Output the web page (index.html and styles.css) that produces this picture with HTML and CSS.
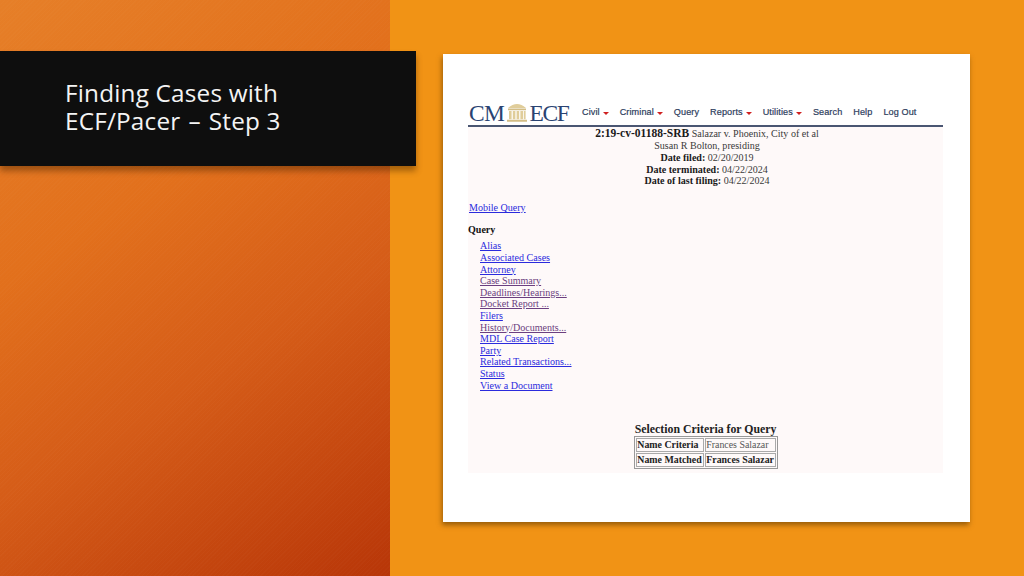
FILE: index.html
```html
<!DOCTYPE html>
<html lang="en">
<head>
<meta charset="utf-8">
<title>Finding Cases with ECF/Pacer – Step 3</title>
<link rel="stylesheet" href="styles.css">
</head>
<body>
<main class="slide">
  <div class="side"></div>
  <div class="stage">
    <section class="shot">
      <header class="ecf-head">
        <div class="logo">
          <span>CM</span>
          <svg class="temple" viewBox="0 0 20 20" width="20" height="20" aria-hidden="true">
            <path d="M1 6Q10-2 19 6z" fill="#e0cd9a"/>
            <path d="M1 6.500h18v1.800H1zM0 17.800h20v2H0z" fill="#d3bd85"/>
            <path d="M2 9h2.600v8.200H2zM5.800 9h2.600v8.200H5.800zM9.600 9h2.600v8.200H9.600zM13.400 9H16v8.200h-2.600zM16.800 9h1.800v8.200h-1.800z" fill="#e0cd9a"/>
          </svg>
          <span class="ecf">ECF</span>
        </div>
        <nav class="menu">
          <span class="mi caret">Civil</span>
          <span class="mi caret">Criminal</span>
          <span class="mi">Query</span>
          <span class="mi caret">Reports</span>
          <span class="mi caret">Utilities</span>
          <span class="mi">Search</span>
          <span class="mi">Help</span>
          <span class="mi">Log Out</span>
        </nav>
      </header>
      <div class="ecf-body">
        <div class="case">
          <p><b class="num">2:19-cv-01188-SRB</b> Salazar v. Phoenix, City of et al</p>
          <p>Susan R Bolton, presiding</p>
          <p><b>Date filed:</b> 02/20/2019</p>
          <p><b>Date terminated:</b> 04/22/2024</p>
          <p><b>Date of last filing:</b> 04/22/2024</p>
        </div>
        <a class="link mobile" href="#">Mobile Query</a>
        <div class="qhead">Query</div>
        <ul class="links">
          <li><a class="link" href="#">Alias</a></li>
          <li><a class="link" href="#">Associated Cases</a></li>
          <li><a class="link" href="#">Attorney</a></li>
          <li><a class="link seen" href="#">Case Summary</a></li>
          <li><a class="link seen" href="#">Deadlines/Hearings...</a></li>
          <li><a class="link seen" href="#">Docket Report ...</a></li>
          <li><a class="link" href="#">Filers</a></li>
          <li><a class="link seen" href="#">History/Documents...</a></li>
          <li><a class="link" href="#">MDL Case Report</a></li>
          <li><a class="link" href="#">Party</a></li>
          <li><a class="link" href="#">Related Transactions...</a></li>
          <li><a class="link" href="#">Status</a></li>
          <li><a class="link" href="#">View a Document</a></li>
        </ul>
        <div class="criteria">
          <div class="crit-title">Selection Criteria for Query</div>
          <table class="crit">
            <tr><th>Name Criteria</th><td>Frances Salazar</td></tr>
            <tr><th>Name Matched</th><th>Frances Salazar</th></tr>
          </table>
        </div>
      </div>
    </section>
  </div>
  <div class="banner"><h1>Finding Cases with<br>ECF/Pacer <span class="dash">–</span> Step 3</h1></div>
</main>
</body>
</html>
```
FILE: styles.css
```css
* { box-sizing: border-box; }
html, body { margin: 0; padding: 0; }
body { width: 1024px; height: 576px; overflow: hidden; }

.slide { position: relative; display: flex; width: 1024px; height: 576px; background: #f19315; }
.side {
  width: 390px; height: 576px; flex: none;
  background:
    repeating-linear-gradient(135deg, rgba(255, 255, 255, .015) 0 1px, transparent 1px 3px),
    linear-gradient(148deg, #e67f28 0%, #e2701c 35%, #d55c18 62%, #b83608 100%);
}
.stage { flex: 1; padding: 54px 54px 54px 53px; }

.banner {
  position: absolute; left: 0; top: 51px; width: 416px; height: 115px;
  background: #0e0e0e; box-shadow: 0 5px 6px rgba(70, 35, 0, .45);
  padding: 28px 0 0 65px;
}
.banner h1 {
  margin: 0; color: #f4f4f4; font: 400 24.300px/28px "Open Sans", sans-serif;
  letter-spacing: .2px;
}
.dash { margin: 0 1.500px; }

.shot {
  width: 527px; height: 468px; background: #fff;
  box-shadow: -1px 3px 5px rgba(90, 55, 0, .6);
  padding: 47px 27px 0 25px;
  display: flex; flex-direction: column;
}
.ecf-head {
  display: flex; align-items: flex-end; height: 26px;
  border-bottom: 2px solid #4a5672; padding-bottom: 2px;
}
.logo {
  display: flex; align-items: flex-end; width: 114px; flex: none; padding-left: 1px;
  font: 400 23.500px/20px "Liberation Serif", serif; color: #2a4372; letter-spacing: -.6px;
}
.ecf { letter-spacing: -1.300px; }
.temple { margin: 0 2px 1px 3px; flex: none; }
.menu { display: flex; gap: 11px; align-self: center; margin-top: -1px; }
.mi { font: 400 9.100px/12px "Liberation Sans", sans-serif; color: #2c3c5c; -webkit-text-stroke: .2px #2c3c5c; letter-spacing: .1px; }
.caret::after {
  content: ""; display: inline-block; margin-left: 3px; vertical-align: 0;
  border: 3px solid transparent; border-top: 3px solid #cf2020; border-bottom: 0;
}

.ecf-body {
  flex: none; height: 346px; background: #fef9f9; padding-left: 1px;
  font: 400 10.050px/11.600px "Liberation Serif", serif; color: #3a3a3a;
  display: flex; flex-direction: column; align-items: flex-start;
}
.case { align-self: stretch; text-align: center; padding-left: 2px; }
.case p { margin: 0; line-height: 11.800px; }
.case p:first-child { line-height: 13px; }
.case b { color: #1a1a1a; }
.num { font-size: 11.500px; }
.link { color: #2b2bdd; text-decoration: underline; }
.seen { color: #6b3f80; }
.mobile { margin-top: 15px; }
.qhead { margin-top: 10px; margin-left: -1px; font-weight: 700; color: #111; }
.links { list-style: none; margin: 5px 0 0; padding: 0 0 0 11px; }
.links li { height: 11.600px; }

.criteria { align-self: flex-end; margin: 32px 165px 0 0; }
.crit-title { margin-left: 3px; font-weight: 700; font-size: 11.800px; line-height: 13px; color: #222; }
.crit { border-collapse: separate; border-spacing: 1px; border: 1px solid #999; margin-left: 2px; }
.crit th, .crit td {
  border: 1px solid #aaa; padding: 0 1px 0 .5px; text-align: left; white-space: nowrap;
  font-size: 9.900px; line-height: 12px; color: #222;
}
.crit td { color: #555; }
```
